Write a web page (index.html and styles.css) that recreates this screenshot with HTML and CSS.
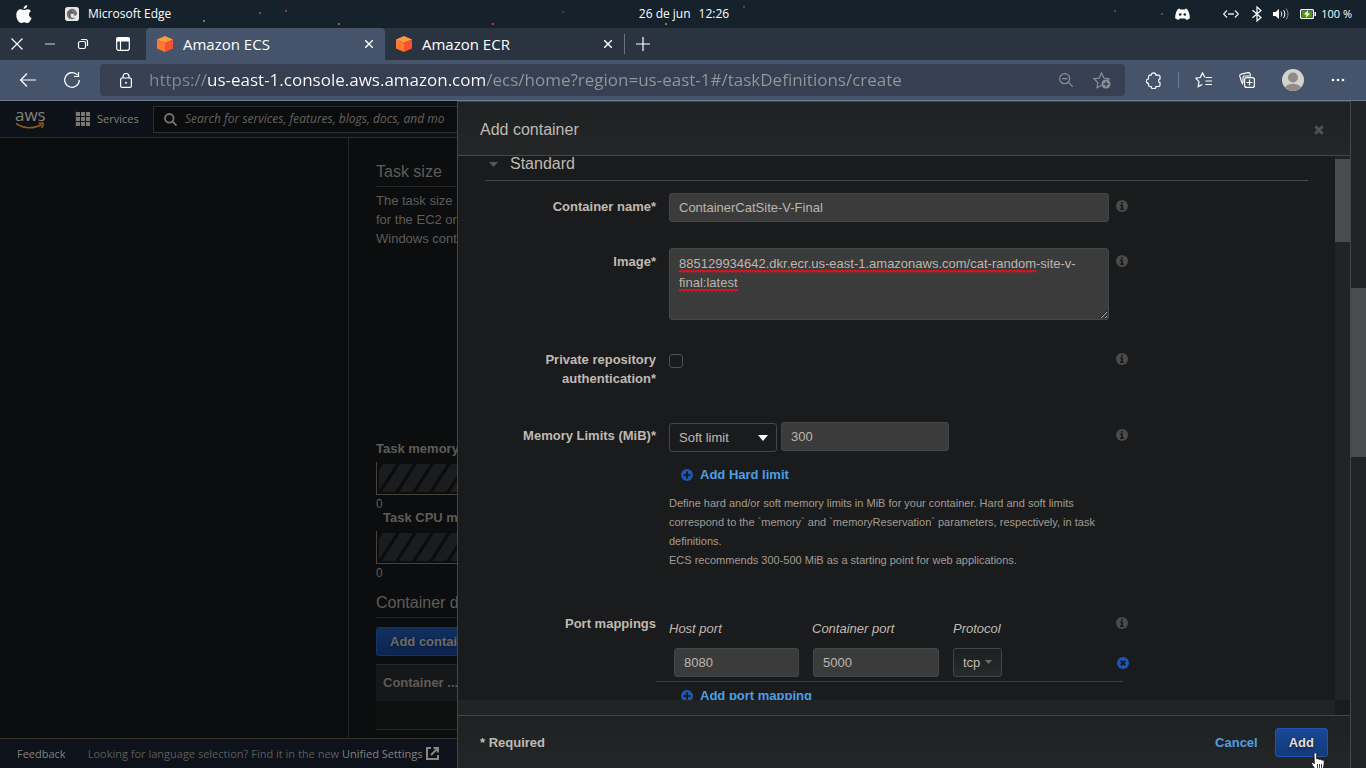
FILE: index.html
```html
<!DOCTYPE html>
<html lang="en">
<head>
<meta charset="utf-8">
<title>Amazon ECS</title>
<link rel="stylesheet" href="styles.css">
</head>
<body>
<svg class="defs" aria-hidden="true">
  <symbol id="cube" viewBox="0 0 16 16">
    <path d="M8 0 16 3.500 8 7 0 3.500z" fill="#ff9a3c"/>
    <path d="M0 3.500 8 7v9l-8-3.500z" fill="#ff7a30"/>
    <path d="M16 3.500 8 7v9l8-3.500z" fill="#f9512c"/>
  </symbol>
  <symbol id="info" viewBox="0 0 12 12">
    <circle cx="6" cy="6" r="6" fill="#4b4b4b"/>
    <path d="M5 2h2v1.600H5zM4 4.600h3v4h1V10H4V8.600h1V6H4z" fill="#1a1b1c"/>
  </symbol>
  <symbol id="plus" viewBox="0 0 12 12">
    <circle cx="6" cy="6" r="6" fill="#1b56b8"/>
    <path d="M5 2.500h2V5h2.500v2H7v2.500H5V7H2.500V5H5z" fill="#1a1b1c"/>
  </symbol>
  <symbol id="remove" viewBox="0 0 12 12">
    <circle cx="6" cy="6" r="6" fill="#1b56b8"/>
    <path d="M3.800 3.800l4.400 4.400M8.200 3.800 3.800 8.200" stroke="#1a1b1c" stroke-width="2.200"/>
  </symbol>
</svg>

<header class="sysbar">
  <div class="sys-left">
    <svg width="16" height="19" viewBox="0 0 16 19"><path d="M11.200 0c.2 1.900-1.600 4-3.600 3.900C7.400 2.100 9.200.2 11.200 0zM8 5.200c.8 0 1.900-1 3.600-1 1.400.1 2.700.8 3.400 1.900-2.900 1.800-2.500 5.700.6 7-.7 1.900-2.200 4.900-4 4.900-1.300 0-1.700-.8-3.300-.8s-2 .8-3.200.8C2.900 18 .3 13.900.3 10c0-3.700 2.300-5.700 4.600-5.700 1.400 0 2.400.9 3.100.9z" fill="#fff"/></svg>
    <svg class="edge" width="14" height="14" viewBox="0 0 15 15"><rect width="15" height="15" rx="3" fill="#e8e8e8"/><path d="M2 8a5.500 5.500 0 0 1 11-1c0 2.400-3 2.800-3.800 1.800C10 6.500 6 5.600 5.800 8.800c0 2.200 2.700 3.400 5.400 2.500C8 15 2 13 2 8z" fill="#777"/><path d="M2.500 7C4 4.500 7.500 4.600 8.500 6.500 6 5.500 4.200 8 5.600 11" stroke="#444" fill="none"/></svg>
    <span>Microsoft Edge</span>
  </div>
  <time class="clock"><span>26 de jun</span><span>12:26</span></time>
  <div class="sys-right">
    <svg width="15" height="12" viewBox="0 0 15 12"><path d="M4.500.6 3 .9C1 3.500 0 7 .2 10.300c1.200 1 2.500 1.500 3.700 1.500l.9-1.400h5.400l.9 1.400c1.200 0 2.500-.5 3.700-1.500C15 7 14 3.500 12 .9L10.500.6 10 1.600H5z" fill="#fff"/><circle cx="5.200" cy="6.500" r="1.300" fill="#17232b"/><circle cx="9.800" cy="6.500" r="1.300" fill="#17232b"/></svg>
    <svg class="net" width="16" height="8" viewBox="0 0 16 8" fill="none" stroke="#dde2e4"><path d="M4 .5.700 4 4 7.500M12 .5 15.300 4 12 7.500M5 4h6" stroke-width="1.300"/></svg>
    <svg width="10" height="16" viewBox="0 0 10 16" fill="none" stroke="#fff" stroke-width="1.200"><path d="M.5 4.300 9 11.500l-4 3.500V1l4 3.500L.5 11.700"/></svg>
    <svg width="16" height="12" viewBox="0 0 16 12" fill="none" stroke="#fff"><path d="M0 4h2.500L6 1v10L2.500 8H0z" fill="#fff" stroke="none"/><path d="M8 3.500c1 1.500 1 3.500 0 5M10.500 2c1.800 2.500 1.800 5.500 0 8"/><path d="M13 .5c2.600 3.500 2.600 7.500 0 11" opacity=".5"/></svg>
    <svg width="16" height="10" viewBox="0 0 16 10"><rect x=".6" y=".6" width="12.800" height="8.800" rx="1" fill="#17232b" stroke="#fff" stroke-width="1.200"/><path d="M2 2h10v6H2z" fill="#4e9a06"/><path d="M14.500 3H16v4h-1.500z" fill="#fff"/><path d="m8 1-4 4.500h2.500L6 9l4-4.500H7.500z" fill="#fff"/></svg>
    <span>100 %</span>
  </div>
</header>

<nav class="tabs" aria-label="Browser tabs">
  <div class="window-controls">
    <button aria-label="Close window"><svg width="12" height="12" viewBox="0 0 12 12"><path d="m.5.5 11 11M11.500.5l-11 11"/></svg></button>
    <button aria-label="Minimize"><svg width="12" height="12" viewBox="0 0 12 12"><path d="M1 6h10" stroke="#9aa0a8" stroke-width="1.500"/></svg></button>
    <button aria-label="Restore"><svg width="12" height="12" viewBox="0 0 12 12"><rect x="1.500" y="3.500" width="7" height="7" rx="1.500"/><path d="M4 1.500h4.500a2 2 0 0 1 2 2V8"/></svg></button>
    <button aria-label="Tab actions"><svg width="14" height="14" viewBox="0 0 14 14"><rect x=".7" y=".7" width="12.600" height="12.600" rx="2"/><path d="M1 1h12v3H1z" fill="#fff"/><path d="M4.500 4v9"/></svg></button>
  </div>
  <div class="tab active">
    <svg width="16" height="16"><use href="#cube"/></svg><span>Amazon ECS</span>
    <button aria-label="Close Amazon ECS"><svg width="8" height="8" viewBox="0 0 8 8"><path d="m0 0 8 8M8 0 0 8"/></svg></button>
  </div>
  <div class="tab">
    <svg width="16" height="16"><use href="#cube"/></svg><span>Amazon ECR</span>
    <button aria-label="Close Amazon ECR"><svg width="8" height="8" viewBox="0 0 8 8"><path d="m0 0 8 8M8 0 0 8"/></svg></button>
  </div>
  <button class="new-tab" aria-label="New tab"><svg width="14" height="14" viewBox="0 0 14 14"><path d="M7 0v14M0 7h14" stroke-width="1.200"/></svg></button>
</nav>

<div class="toolbar">
  <button aria-label="Back"><svg width="16" height="14" viewBox="0 0 16 14"><path d="M16 7H.8M7 .5.700 7 7 13.500"/></svg></button>
  <button aria-label="Refresh"><svg width="16" height="16" viewBox="0 0 16 16"><path d="M13.500 3.200A7.300 7.300 0 1 0 15.300 8M14.500 0v4.500H10"/></svg></button>
  <div class="address">
    <svg width="12" height="15" viewBox="0 0 12 15"><rect x=".6" y="5" width="10.800" height="9.400" rx="1.500"/><path d="M3 5V3.500a3 3 0 0 1 6 0V5"/><circle class="solid" cx="6" cy="9.700" r="1" fill="#fff"/></svg>
    <input class="url" type="text" aria-label="Address" spellcheck="false" value="https://us-east-1.console.aws.amazon.com/ecs/home?region=us-east-1#/taskDefinitions/create">
    <svg class="dim" width="14" height="14" viewBox="0 0 14 14"><circle cx="5.700" cy="5.700" r="5"/><path d="m9.300 9.300 4.400 4.400M3 5.700h5.400"/></svg>
    <svg class="dim" width="18" height="17" viewBox="0 0 18 17"><path d="M8.500 13.300 4 15.600l.8-5.100L1 6.800l5.200-.8L8.500 1l2.300 5 5.200.8-1.500 1.700"/><circle class="solid" cx="13" cy="12" r="4.600" fill="#8b8f97"/><path d="M13 9.500v5M10.500 12h5" stroke="#374052" stroke-width="1.400"/></svg>
  </div>
  <div class="actions">
    <button aria-label="Extensions"><svg width="16" height="17" viewBox="0 0 16 17"><path d="M5.200 3.200a2.400 2.400 0 0 1 4.800 0h2.500a1.500 1.500 0 0 1 1.500 1.500V7a1.900 1.900 0 0 0 0 3.700v2.300a1.500 1.500 0 0 1-1.500 1.500H10a2.400 2.400 0 0 1-4.800 0H4a1.500 1.500 0 0 1-1.500-1.500v-1.600a2.200 2.200 0 0 1 0-4.400V4.700A1.500 1.500 0 0 1 4 3.200z" stroke-linejoin="round"/></svg></button>
    <span class="rule"></span>
    <button aria-label="Favorites"><svg width="17" height="16" viewBox="0 0 17 16"><path d="M9.800 5.300 7.500.8 5.300 5.500.7 6.200 4 9.600l-.8 5L7.300 12.500M10.500 5.500H17M10.500 9H17M10.500 12.500H17"/></svg></button>
    <button aria-label="Collections"><svg width="16" height="16" viewBox="0 0 16 16"><rect x="5.600" y="5.600" width="9.800" height="9.800" rx="2"/><path d="M10.500 7.500v6M7.500 10.500h6M3.800 12.500 2.500 9.500.8 4.200C.6 3.200 1 2.500 2 2.200L9 .7c1-.2 1.600.2 2 1l.5 1.500M4 11V5.500C4 4.600 4.700 4 5.500 4H12"/></svg></button>
    <button aria-label="Profile"><svg class="solid" width="22" height="22" viewBox="0 0 22 22"><circle cx="11" cy="11" r="11" fill="#d4d2cf"/><circle cx="11" cy="8.500" r="5" fill="#908b87"/><path d="M3 18.500c3-5 13-5 16 0a11 11 0 0 1-16 0z" fill="#908b87"/></svg></button>
    <button aria-label="Settings"><svg class="solid" width="14" height="4" viewBox="0 0 14 4"><g fill="#fff"><circle cx="2" cy="2" r="1.300"/><circle cx="7" cy="2" r="1.300"/><circle cx="12" cy="2" r="1.300"/></g></svg></button>
  </div>
</div>

<div class="viewport">
  <div class="page">
    <header class="aws-bar">
      <a class="aws-logo" href="#" aria-label="AWS"><span>aws</span><svg width="30" height="8" viewBox="0 0 30 8" fill="none" stroke="#8a5520" stroke-width="1.700"><path d="M1 1.500C9 7 19 7 26.500 2.500M23.500 1h4.500c.4 1.500-.3 3.500-1.500 5"/></svg></a>
      <button class="services"><svg width="14" height="14" viewBox="0 0 14 14" fill="#7a7774"><path d="M0 0h4v4H0zM5 0h4v4H5zM10 0h4v4h-4zM0 5h4v4H0zM5 5h4v4H5zM10 5h4v4h-4zM0 10h4v4H0zM5 10h4v4H5zM10 10h4v4h-4z"/></svg>Services</button>
      <div class="search">
        <svg width="13" height="13" viewBox="0 0 13 13" fill="none" stroke="#777572" stroke-width="1.800"><circle cx="5.300" cy="5.300" r="4.300"/><path d="m8.500 8.500 4 4"/></svg>
        <input type="search" aria-label="Search" placeholder="Search for services, features, blogs, docs, and mo">
      </div>
    </header>
    <div class="page-body">
      <aside class="side"></aside>
      <main class="task">
        <h2>Task size</h2>
        <p class="desc">The task size a<br>for the EC2 or<br>Windows conta</p>
        <h3>Task memory</h3>
        <div class="meter"><svg width="100%" height="28"><defs><pattern id="hatch" width="17" height="28" patternUnits="userSpaceOnUse"><path d="M-1 28 17 0h4L3 28zM-18 28 0 0h4l-18 28zM16 28 34 0h4L20 28z" fill="#0b0c0d"/></pattern></defs><rect width="100%" height="28" fill="#1b1c1e"/><rect width="100%" height="28" fill="url(#hatch)"/></svg></div>
        <p class="zero">0</p>
        <h3 class="cpu">Task CPU ma</h3>
        <div class="meter"><svg width="100%" height="28"><rect width="100%" height="28" fill="#1b1c1e"/><rect width="100%" height="28" fill="url(#hatch)"/></svg></div>
        <p class="zero">0</p>
        <h2 class="defs-title">Container d</h2>
        <button class="primary dimmed">Add contain</button>
        <table class="list"><thead><tr><th>Container ...</th></tr></thead><tbody><tr><td></td></tr></tbody></table>
      </main>
    </div>
    <footer class="aws-foot">
      <a href="#">Feedback</a>
      <span>Looking for language selection? Find it in the new <a href="#">Unified Settings</a></span>
      <svg width="13" height="13" viewBox="0 0 13 13" fill="none" stroke="#8a8783" stroke-width="2"><path d="M5 1H1v11h11V8M7.500 1H12v4.500M12 1 5 8"/></svg>
    </footer>
  </div>

  <section class="dialog" role="dialog" aria-labelledby="dlg-title">
    <header class="dlg-head">
      <h1 id="dlg-title">Add container</h1>
      <button aria-label="Close"><svg width="10" height="10" viewBox="0 0 10 10"><path d="m1.300 1.300 7.400 7.400M8.700 1.300 1.300 8.700" stroke="#4f5253" stroke-width="3"/></svg></button>
    </header>
    <div class="dlg-body">
      <form class="form" id="container-form">
        <h2 class="section"><svg width="9" height="5" viewBox="0 0 9 5"><path d="M0 0h9L4.500 5z" fill="#555656"/></svg>Standard</h2>

        <div class="row">
          <label class="name" for="cname">Container name*</label>
          <input id="cname" class="box" type="text" value="ContainerCatSite-V-Final" spellcheck="false">
          <svg class="info" width="12" height="12"><use href="#info"/></svg>
        </div>

        <div class="row">
          <label class="name" for="image">Image*</label>
          <div class="area">
            <textarea id="image" class="box" spellcheck="false">885129934642.dkr.ecr.us-east-1.amazonaws.com/cat-random-site-v-final:latest</textarea>
            <i class="squiggle first"></i><i class="squiggle second"></i>
          </div>
          <svg class="info" width="12" height="12"><use href="#info"/></svg>
        </div>

        <div class="row">
          <label class="name" for="private">Private repository authentication*</label>
          <input id="private" class="check" type="checkbox">
          <svg class="info" width="12" height="12"><use href="#info"/></svg>
        </div>

        <div class="row memory">
          <label class="name" for="limit">Memory Limits (MiB)*</label>
          <div>
            <div class="limits">
              <select id="limit"><option>Soft limit</option></select>
              <input class="box" type="text" aria-label="Memory limit" value="300">
            </div>
            <a class="add" href="#"><svg width="12" height="12"><use href="#plus"/></svg>Add Hard limit</a>
            <p class="help">Define hard and/or soft memory limits in MiB for your container. Hard and soft limits correspond to the `memory` and `memoryReservation` parameters, respectively, in task definitions.<br>ECS recommends 300-500 MiB as a starting point for web applications.</p>
          </div>
          <svg class="info" width="12" height="12"><use href="#info"/></svg>
        </div>

        <div class="row ports">
          <span class="name">Port mappings</span>
          <div class="mapping">
            <div class="port-head"><label for="host">Host port</label><label for="cport">Container port</label><label for="proto">Protocol</label></div>
            <div class="port-line">
              <input id="host" class="box" type="text" value="8080">
              <input id="cport" class="box" type="text" value="5000">
              <select id="proto"><option>tcp</option></select>
              <button type="button" aria-label="Remove port mapping"><svg width="12" height="12"><use href="#remove"/></svg></button>
            </div>
            <a class="add" href="#"><svg width="12" height="12"><use href="#plus"/></svg>Add port mapping</a>
          </div>
          <svg class="info" width="12" height="12"><use href="#info"/></svg>
        </div>
      </form>
      <div class="track"><div class="thumb"></div></div>
      <div class="htrack"></div>
    </div>
    <footer class="dlg-foot">
      <strong>* Required</strong>
      <a href="#">Cancel</a>
      <button class="primary">Add</button>
    </footer>
  </section>
  <div class="page-track"><div class="thumb"></div></div>
  <svg class="pointer" width="15" height="20" viewBox="0 0 15 20"><path d="M3 1.500C4 .3 5.700.8 5.700 2.500V7c1-.6 2-.4 2.400.5 1-.6 2.200-.3 2.600.7 1.300-.4 2.500.2 2.500 1.600 0 4-.8 5-1.700 9.200H5C4 16 1 13.500.7 11.500c0-1.500 1.700-1.300 2.600.3z" fill="#fff" stroke="#111" stroke-width=".8"/><path d="M6.500 12v4M8.500 12v4M10.500 12v4" stroke="#111" stroke-width=".8"/></svg>
</div>
</body>
</html>
```
FILE: styles.css
```css
* { box-sizing: border-box; }
body {
  margin: 0;
  height: 100vh;
  display: flex;
  flex-direction: column;
  overflow: hidden;
  background: #0c0d0e;
  font: 13px/19px "Liberation Sans", Arial, sans-serif;
  color: #c0bab2;
}
h1, h2, h3, p { margin: 0; font-weight: 400; }
button { padding: 0; border: 0; background: none; color: inherit; font: inherit; }
a { text-decoration: none; color: inherit; }
svg { display: block; flex: none; }
.defs { position: absolute; width: 0; height: 0; }

/* Desktop bar */
.sysbar {
  flex: none;
  height: 28px;
  display: grid;
  grid-template-columns: 1fr auto 1fr;
  align-items: center;
  padding: 0 14px 0 16px;
  color: #fff;
  font: 12px/16px "Open Sans", "Noto Sans", sans-serif;
  background:
    radial-gradient(circle at 260px 13px, #87424f 0 1px, transparent 1px),
    radial-gradient(circle at 286px 11px, #8a3b50 0 1px, transparent 1px),
    radial-gradient(circle at 339px 24px, #80666b 0 1px, transparent 1px),
    radial-gradient(circle at 204px 21px, #7b7b75 0 1px, transparent 1px),
    radial-gradient(circle at 493px 24px, #b92f55 0 1px, transparent 1px),
    radial-gradient(circle at 563px 12px, #573044 0 1px, transparent 1px),
    radial-gradient(circle at 666px 24px, #a36b60 0 1px, transparent 1px),
    radial-gradient(circle at 744px 7px, #49454f 0 1px, transparent 1px),
    radial-gradient(circle at 1115px 11px, #415058 0 1px, transparent 1px),
    radial-gradient(circle at 1162px 14px, #46545b 0 1px, transparent 1px),
    #15222b;
}
.sys-left { display: flex; align-items: center; }
.sys-left .edge { margin: 0 9px 0 33px; }
.clock { display: flex; gap: 8px; }
.sys-right { display: flex; align-items: center; justify-content: flex-end; gap: 11px; }
.sys-right .net { margin: 0 2px 0 22px; }
.sys-right span { margin-left: -6px; font-size: 11px; }

/* Tab strip */
.tabs {
  flex: none;
  height: 32px;
  display: flex;
  background: #2a3340;
  color: #fff;
  font: 15px/20px "Open Sans", "Noto Sans", sans-serif;
}
.tabs svg, .toolbar svg { fill: none; stroke: #fff; stroke-width: 1.2; }
.tabs use, .toolbar .solid { stroke: none; }
.window-controls { display: flex; align-items: center; gap: 21px; width: 146px; padding-left: 11px; }
.window-controls button:last-child { margin-left: 6px; }
.tab { display: flex; align-items: center; gap: 10px; width: 239px; padding: 0 12px 1px 11px; }
.tab svg { stroke-width: 1.4; }
.tab button { margin-left: auto; }
.tab.active { background: #45546b; border-radius: 4px 4px 0 0; }
.new-tab { align-self: center; height: 20px; padding-left: 11px; border-left: 1px solid #697280; }

/* Toolbar */
.toolbar {
  flex: none;
  height: 41px;
  display: flex;
  align-items: center;
  padding-left: 20px;
  background: #45546b;
  border-bottom: 1px solid #6d7c92;
}
.toolbar > button { width: 44px; }
.address {
  flex: 1;
  height: 32px;
  display: flex;
  align-items: center;
  padding: 0 14px 0 20px;
  margin-left: -8px;
  border-radius: 4px;
  background: #374052;
}
.url {
  flex: 1;
  min-width: 0;
  margin: 0 10px 0 17px;
  padding: 0;
  border: 0;
  outline: 0;
  color: transparent;
  font: 17px/24px "Open Sans", "Noto Sans", sans-serif;
  background: linear-gradient(90deg, #858a92 58px, #fff 58px 337px, #92979d 337px);
  -webkit-background-clip: text;
  background-clip: text;
}
.address .dim { stroke: #8b8f97; margin-left: 10px; }
.address .dim + .dim { margin-left: 20px; }
.actions { display: flex; align-items: center; gap: 27px; padding: 0 21px; }
.actions .rule { width: 1px; height: 16px; margin: 0 -11px; background: #6e7b90; }

/* Console page behind the dialog */
.viewport { flex: 1; min-height: 0; display: flex; position: relative; }
.page { flex: 0 0 457px; min-width: 0; display: flex; flex-direction: column; overflow: hidden; color: #5f5c58; white-space: nowrap; }
.aws-bar { flex: none; height: 37px; display: flex; align-items: center; background: #0d1118; border-bottom: 1px solid #302e2c; font: 11px/16px "Open Sans", "Noto Sans", sans-serif; }
.aws-logo { width: 61px; height: 20px; margin-left: 15px; border-right: 1px solid #22262c; color: #85827d; font: 17px/12px "Open Sans", "Noto Sans", sans-serif; }
.aws-logo svg { margin-top: 1px; }
.services { display: flex; align-items: center; gap: 7px; width: 77px; color: #85827d; }
.aws-bar .search { flex: 1; display: flex; align-items: center; height: 27px; padding-left: 10px; gap: 8px; background: #0b0c0e; border: 1px solid #302f2e; border-right: 0; }
.search input { flex: 1; min-width: 0; padding: 0; border: 0; outline: 0; background: none; font: italic 12px/18px "Open Sans", "Noto Sans", sans-serif; }
.search input::placeholder { color: #65625e; }
.search input::-webkit-search-cancel-button { display: none; }
.page-body { flex: 1; min-height: 0; display: flex; }
.side { width: 349px; border-right: 1px solid #252627; }
.task { flex: 1; min-width: 0; padding: 24px 0 0 27px; overflow: hidden; }
.task h2 { font-size: 16px; line-height: 20px; padding-bottom: 4px; border-bottom: 1px solid #252627; }
.desc { margin: 4px 0 191px; }
.task h3 { font-weight: 700; font-size: 13px; }
.task .cpu { padding-left: 7px; }
.meter { height: 33px; margin-top: 4px; padding: 2px 0 2px 2px; border: solid #48413a; border-width: 0 0 1px 1px; }
.zero { font-size: 12px; line-height: 14px; padding-top: 2px; height: 13px; }
.task .defs-title { margin: 16px 0 9px; }
.primary {
  height: 29px;
  padding: 0 13px 1px;
  border: 1px solid #1f55ad;
  border-radius: 3px;
  background: linear-gradient(#194894, #123a7c);
  color: #e2ded8;
  font-weight: 700;
  text-shadow: 0 1px 3px #0a1930;
}
.dimmed { display: block; width: 100%; padding-right: 0; border-color: #123468; border-right: 0; border-radius: 3px 0 0 3px; background: linear-gradient(#10305f, #0d2550); color: #6d6b68; text-align: left; }
.list { width: 100%; margin-top: 8px; border-collapse: collapse; border: solid #252627; border-width: 1px 0; }
.list th { height: 36px; padding: 0 7px; text-align: left; background: #161718; }
.list td { height: 29px; padding: 0; background: #0e100f; }
.aws-foot { flex: none; height: 30px; display: flex; align-items: center; padding-left: 17px; border-top: 1px solid #353330; background: #0d121b; font: 11px/16px "Open Sans", "Noto Sans", sans-serif; }
.aws-foot a { color: #85827d; }
.aws-foot span { margin: 0 3px 0 22px; }

/* Dialog */
.dialog { flex: 1; min-width: 0; display: flex; flex-direction: column; border: 1px solid #42484a; border-bottom: 0; background: #1a1b1c; }
.dlg-head { flex: none; height: 54px; display: flex; align-items: center; justify-content: space-between; padding: 2px 26px 0 22px; border-bottom: 1px solid #42484a; background: linear-gradient(#1d2222, #242526); }
.dlg-head h1 { font-size: 16px; }
.dlg-body { flex: 1; min-height: 0; display: grid; grid-template: minmax(0, 1fr) 15px / minmax(0, 1fr) 15px; }
.track, .htrack, .page-track { background: #202425; }
.thumb { background: #484c4f; }
.track .thumb { height: 83px; margin-top: 3px; }
.page-track { flex: 0 0 15px; }
.page-track .thumb { height: 169px; margin-top: 187px; }
.form { overflow: hidden; padding: 0 27px; }
.section { display: flex; align-items: center; gap: 12px; padding: 0 4px 8px; border-bottom: 1px solid #42484a; font-size: 16px; line-height: 16px; }
.row { display: grid; grid-template-columns: 171px minmax(0, 440px) 12px; align-items: start; column-gap: 13px; margin: 26px 0; }
.section + .row { margin-top: 12px; }
.row .info { margin: 7px 0 0 -6px; }
.name { padding-top: 4px; font-weight: 700; text-align: right; }
.box { height: 29px; width: 100%; min-width: 0; padding: 0 9px 1px; border: 1px solid #424849; border-radius: 3px; background: #3b3b3b; color: #bcb6ae; font: inherit; outline: 0; }
.area { position: relative; }
textarea.box { display: block; height: 72px; padding: 5px 9px; resize: vertical; }
.squiggle { position: absolute; left: 10px; height: 3px; background: url("data:image/svg+xml,%3Csvg xmlns='http://www.w3.org/2000/svg' width='4' height='3'%3E%3Cpath d='M-1 0 1 2 3 0 5 2' fill='none' stroke='%23ff0a18' stroke-width='1.300'/%3E%3C/svg%3E") repeat-x; }
.first { top: 22px; width: 357px; }
.second { top: 41px; width: 59px; }
.check { appearance: none; width: 14px; height: 14px; margin: 8px 0 0; border: 1px solid #4c5152; border-radius: 3px; background: #1a1b1c; }
.row.memory { margin-top: 34px; }
.limits { display: flex; gap: 4px; align-items: start; }
.limits .box { width: 168px; }
select { appearance: none; height: 29px; padding: 0 9px 1px; border: 1px solid #42484a; border-radius: 3px; color: #c0bab2; font: inherit; outline: 0; }
#limit { width: 108px; margin-top: 1px; background: url("data:image/svg+xml,%3Csvg xmlns='http://www.w3.org/2000/svg' width='10' height='6'%3E%3Cpath d='M0 0h10L5 6z' fill='%23fff'/%3E%3C/svg%3E") no-repeat right 8px center #1a1b1c; }
.add { display: flex; align-items: center; gap: 7px; margin: 13px 0 0 12px; color: #4e9fe0; font-weight: 700; }
.help { margin-top: 10px; font-size: 11px; color: #a39c92; }
.row.ports { margin: 40px 0 0; }
.port-head { display: grid; grid-template-columns: 143px 141px auto; padding-top: 9px; font-style: italic; }
.port-line { display: grid; grid-template-columns: 125px 126px 49px 1fr; column-gap: 14px; margin: 10px -14px 0 -13px; padding: 0 0 4px 18px; border-bottom: 1px solid #3a3c3d; }
.port-line button { justify-self: end; margin-right: -6px; align-self: center; }
#proto { background: url("data:image/svg+xml,%3Csvg xmlns='http://www.w3.org/2000/svg' width='7' height='4'%3E%3Cpath d='M0 0h7L3.500 4z' fill='%23716b63'/%3E%3C/svg%3E") no-repeat right 9px top 11px, linear-gradient(#1b1f20, #262b2d); }
.ports .add { margin-top: 4px; }
.dlg-foot { flex: none; height: 53px; display: flex; align-items: center; padding: 1px 22px 0; border-top: 1px solid #42484a; background: linear-gradient(#1d2222, #242526); }
.dlg-foot a { margin: 0 17px 0 auto; color: #4e9fe0; font-weight: 700; }
.pointer { position: absolute; right: 40px; bottom: -4px; }
```
